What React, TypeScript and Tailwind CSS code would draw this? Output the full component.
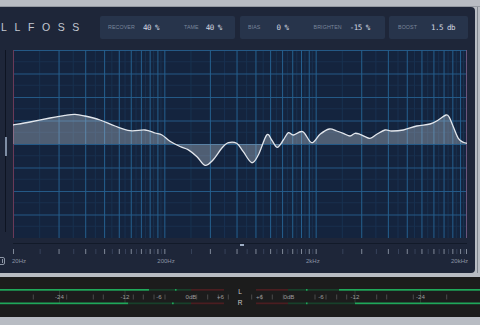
import React from "react";

// graph geometry (px)
const GW = 454;
const GH = 188;
const BASE = GH / 2;

const fx = (f: number) => (Math.log10(f / 20) / 3) * GW;

const majorFreqs: number[] = [];
const minorFreqs: number[] = [];
[20, 200, 2000].forEach((d) => {
  for (let k = 1; k <= 9; k++) {
    majorFreqs.push(d * k);
    minorFreqs.push(d * (k + 0.5));
  }
});
majorFreqs.push(20000);

const rows = Array.from({ length: 9 }, (_, i) => (i * GH) / 8);
const halfRows = Array.from({ length: 8 }, (_, i) => ((i + 0.5) * GH) / 8);

// response curve, page coordinates
const curvePts: [number, number][] = [
  [13, 125], [30, 122], [50, 118], [65, 115.3], [75, 114.3], [85, 116],
  [100, 120], [115, 126], [130, 130.7], [145, 130], [155, 133], [162, 135],
  [170, 141.2], [180, 146.5], [188, 149.6], [197, 156.7], [205, 165.4],
  [213, 160], [221.7, 148.3], [228.3, 142.7], [236.7, 143.3], [243.3, 151.7],
  [251.7, 162.7], [258.3, 155], [266.7, 135], [271.7, 140], [277.3, 147.3],
  [283.3, 140], [288.3, 132.7], [293.3, 135], [302.7, 131.7], [311.7, 142.7],
  [320, 134.3], [329.3, 129], [336.7, 131], [343.3, 133.3], [350, 136],
  [355, 133.3], [360, 134.3], [370, 138.3], [376.7, 134.3], [385, 130],
  [391.7, 131], [403.3, 130], [416.7, 126], [430, 124], [438.3, 120],
  [446, 115], [449.3, 117.3], [453.3, 126.7], [458.3, 138.3], [463.3, 142.3],
  [467, 143.3],
];

const smoothPath = (pts: [number, number][]) => {
  const p = pts.map(([x, y]) => [x - 13, y - 50]);
  let d = `M${p[0][0]},${p[0][1]}`;
  for (let i = 0; i < p.length - 1; i++) {
    const p0 = p[i - 1] || p[i];
    const p1 = p[i];
    const p2 = p[i + 1];
    const p3 = p[i + 2] || p2;
    const c1x = p1[0] + (p2[0] - p0[0]) / 6;
    const c1y = p1[1] + (p2[1] - p0[1]) / 6;
    const c2x = p2[0] - (p3[0] - p1[0]) / 6;
    const c2y = p2[1] - (p3[1] - p1[1]) / 6;
    d += ` C${c1x.toFixed(2)},${c1y.toFixed(2)} ${c2x.toFixed(2)},${c2y.toFixed(2)} ${p2[0].toFixed(2)},${p2[1].toFixed(2)}`;
  }
  return d;
};

const curve = smoothPath(curvePts);
const curveFill = `${curve} L${GW},${BASE} L0,${BASE} Z`;

const Param = ({ label, value, gap }: { label: string; value: string; gap: string }) => (
  <div className="flex items-center">
    <span className="text-[5.3px] text-[#7a869b] tracking-[0.1px]">{label}</span>
    <span className={`${gap} font-['DejaVu_Sans_Mono',monospace] text-[7.5px] tracking-[-0.5px] text-[#d3d8e0]`}>
      {value}
    </span>
  </div>
);

const Header = () => (
  <div className="flex items-center h-[23px] mt-[9px]">
    <div className="w-[100px] pl-[1px] text-[10.5px] tracking-[7.6px] text-[#c3c8d1] leading-none">LLFOSS</div>
    <div className="w-[135px] h-[23px] bg-[#27344b] rounded-[2px] flex items-center pl-[8px]">
      <Param label="RECOVER" value="40 %" gap="ml-[8px]" />
      <div className="ml-[25px]">
        <Param label="TAME" value="40 %" gap="ml-[7px]" />
      </div>
    </div>
    <div className="w-[145px] h-[23px] ml-[5px] bg-[#27344b] rounded-[2px] flex items-center pl-[8px]">
      <Param label="BIAS" value="0 %" gap="ml-[16px]" />
      <div className="ml-[25px]">
        <Param label="BRIGHTEN" value="-15 %" gap="ml-[8px]" />
      </div>
    </div>
    <div className="w-[79px] h-[23px] ml-[4px] bg-[#27344b] rounded-[2px] flex items-center pl-[9px]">
      <Param label="BOOST" value="1.5 db" gap="ml-[14px]" />
    </div>
  </div>
);

const Graph = () => (
  <svg width={GW} height={GH} className="block bg-[#14243e]">
    {halfRows.map((y) => (
      <line key={`hr${y}`} x1={0} x2={GW} y1={y} y2={y} stroke="#182f4e" strokeWidth={1} />
    ))}
    {minorFreqs.map((f) => (
      <line key={`mf${f}`} x1={fx(f)} x2={fx(f)} y1={0} y2={GH} stroke="#183150" strokeWidth={1} />
    ))}
    {rows.map((y) => (
      <line key={`r${y}`} x1={0} x2={GW} y1={y + 0.5} y2={y + 0.5} stroke="#245986" strokeWidth={1} />
    ))}
    {majorFreqs.map((f) => (
      <line key={`f${f}`} x1={fx(f) + 0.5} x2={fx(f) + 0.5} y1={0} y2={GH} stroke="#25608f" strokeWidth={1} />
    ))}
    <line x1={0.5} x2={0.5} y1={0} y2={GH} stroke="#6a3a58" strokeWidth={1} />
    <line x1={GW - 0.5} x2={GW - 0.5} y1={0} y2={GH} stroke="#6b557c" strokeWidth={1} />
    <path d={curveFill} fill="#c9d3e2" fillOpacity={0.33} />
    <path d={curve} fill="none" stroke="#e2e6ec" strokeWidth={1.3} />
  </svg>
);

const AxisTicks = () => (
  <svg width={GW} height={5} className="block">
    {minorFreqs.map((f) => (
      <line key={`t${f}`} x1={fx(f) + 0.5} x2={fx(f) + 0.5} y1={0} y2={5} stroke="#37425a" strokeWidth={1} />
    ))}
    {majorFreqs.map((f) => (
      <line key={`T${f}`} x1={Math.min(fx(f) + 0.5, GW - 0.5)} x2={Math.min(fx(f) + 0.5, GW - 0.5)} y1={0} y2={5} stroke="#7f8898" strokeWidth={1} />
    ))}
  </svg>
);

// level meter, mirrored around x = 240
const C = 240;
const meterLabels: [string, number][] = [
  ["+6", 19.5], ["0dB", 49], ["-6", 81], ["-12", 115], ["-24", 180.5],
];
const meterTicks = [11.7, 21.7, 32.3, 43.3, 75, 86, 96.7, 106.7, 136.7, 146.7, 173.3, 206.7].map((x) => C - x);

type Seg = [number, number, string];
const GREEN = "#1fa85a";
const DKGREEN = "#17402a";
const DKRED = "#4b1d20";
const bars: { y: number; segs: Seg[] }[] = [
  {
    y: 12,
    segs: [
      [0, 149, GREEN], [149, 191, DKGREEN], [175, 176.5, GREEN], [191, 224, DKRED],
      [256, 288, DKRED], [288, 339, DKGREEN], [306, 307.5, GREEN], [339, 480, GREEN],
    ],
  },
  {
    y: 25.5,
    segs: [
      [0, 128.3, GREEN], [128.3, 191, DKGREEN], [172, 173.7, GREEN], [191, 224, DKRED],
      [256, 288, DKRED], [288, 355, DKGREEN], [306, 307.5, GREEN], [355, 480, GREEN],
    ],
  },
];

const Meter = () => (
  <svg width={480} height={40} className="block">
    {[C - 180.5, C - 115, C + 115, C + 180.5].map((x) => (
      <line key={`v${x}`} x1={x} x2={x} y1={12} y2={27} stroke="#2f3b33" strokeWidth={1} />
    ))}
    {bars.map((b) =>
      b.segs.map(([a, z, c], i) => (
        <rect key={`${b.y}-${i}`} x={a} y={b.y} width={z - a} height={1.7} fill={c} />
      ))
    )}
    {[...meterTicks, ...meterTicks.map((x) => 480 - x)].map((x, i) => (
      <line key={`mt${i}`} x1={x} x2={x} y1={17.5} y2={22.5} stroke="#4a4a4a" strokeWidth={1} />
    ))}
    {meterLabels.flatMap(([t, off]) => [
      <text key={`l${t}`} x={C - off} y={22} textAnchor="middle" fontSize={6.2} fill="#9b9b9b" fontFamily="Liberation Sans, sans-serif">{t}</text>,
      <text key={`r${t}`} x={C + off} y={22} textAnchor="middle" fontSize={6.2} fill="#9b9b9b" fontFamily="Liberation Sans, sans-serif">{t}</text>,
    ])}
    <text x={C} y={17} textAnchor="middle" fontSize={6.5} fill="#c9c9c9" fontFamily="Liberation Sans, sans-serif">L</text>
    <text x={C} y={28} textAnchor="middle" fontSize={6.5} fill="#c9c9c9" fontFamily="Liberation Sans, sans-serif">R</text>
  </svg>
);

export default function App() {
  return (
    <div className="w-[480px] h-[325px] overflow-hidden bg-[#b8bcc3] font-['Liberation_Sans',sans-serif]">
      <div className="h-[7px] border-b border-[#9499a1]" />
      <div className="flex h-[266px]">
        <div className="w-[475px] bg-[#1e2639] rounded-r-[4px] flex flex-col">
          <Header />
          <div className="flex mt-[11px]">
            <div className="w-[13px] pl-[5px]">
              <div className="relative w-[1px] h-[182px] bg-[#0e1422]">
                <div className="absolute left-[-0.5px] top-[87px] w-[2px] h-[19px] bg-[#7f8ea5]" />
              </div>
            </div>
            <Graph />
          </div>
          <div className="relative ml-[13px] w-[454px] h-[1px] mt-[5px] bg-[#121a29]">
            <div className="absolute left-[227px] top-[0.5px] w-[4px] h-[2px] bg-[#9dadc4]" />
          </div>
          <div className="ml-[13px] mt-[5px]">
            <AxisTicks />
          </div>
          <div className="flex items-center mt-[3px]">
            <div className="w-[9px] h-[8px] -ml-[4px] border border-[#8d96a6] rounded-[2px] flex items-center justify-end pr-[1px]">
              <div className="w-[1px] h-[4px] bg-[#8d96a6]" />
            </div>
            <div className="ml-[7px] w-[456px] flex justify-between text-[6px] leading-[7px] text-[#8b94a4]">
              <span>20Hz</span>
              <span>200Hz</span>
              <span>2kHz</span>
              <span>20kHz</span>
            </div>
          </div>
        </div>
        <div className="w-[2px]" />
        <div className="w-[1px] bg-[#80868f]" />
      </div>
      <div className="h-[4px]" />
      <div className="h-[40px] bg-[#1c1c1c]">
        <Meter />
      </div>
    </div>
  );
}
